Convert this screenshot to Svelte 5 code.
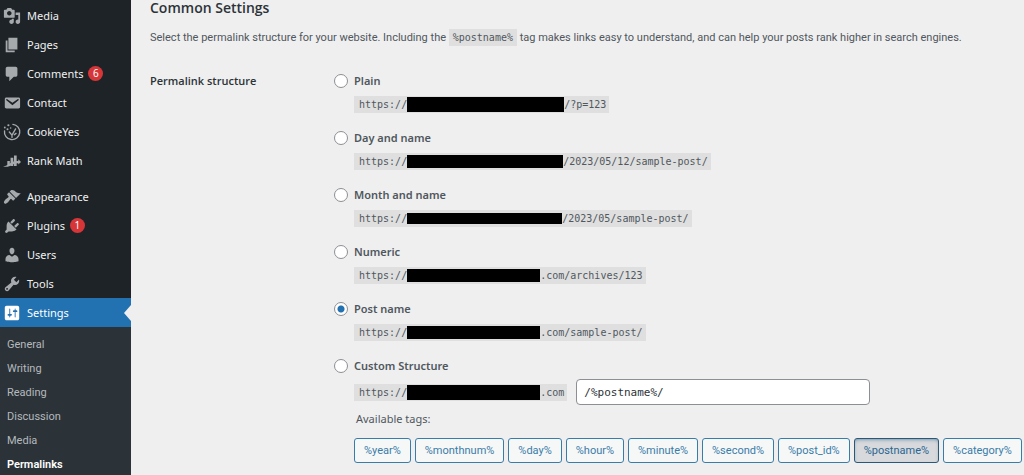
<script>
  const mainItems = [
    { label: 'Media', icon: 'M13 11V4c0-.55-.45-1-1-1h-1.670L9 1H5L3.670 3H2c-.55 0-1 .45-1 1v7c0 .55.45 1 1 1h10c.55 0 1-.45 1-1zM7 4.500c1.380 0 2.500 1.120 2.500 2.500S8.380 9.500 7 9.500 4.500 8.380 4.500 7 5.620 4.500 7 4.500zM14 6h5v10.500c0 1.380-1.120 2.500-2.500 2.500S14 17.880 14 16.500s1.120-2.500 2.500-2.500c.17 0 .34.02.5.05V9h-3V6zm-4 8.050V13h2v3.500c0 1.380-1.120 2.500-2.500 2.500S7 17.880 7 16.500 8.120 14 9.500 14c.17 0 .34.02.5.05z' },
    { label: 'Pages', icon: 'M6 15V2h10v13H6zm-1 1h8v2H3V5h2v11z' },
    { label: 'Comments', count: 6, icon: 'M5 2h9c1.100 0 2 .9 2 2v7c0 1.100-.9 2-2 2h-2l-5 5v-5H5c-1.100 0-2-.9-2-2V4c0-1.100.9-2 2-2z' },
    { label: 'Contact', icon: 'M3.870 4h13.250C18.370 4 19 4.590 19 5.790v8.420c0 1.190-.63 1.790-1.880 1.790H3.870c-1.250 0-1.880-.6-1.880-1.790V5.790c0-1.200.63-1.790 1.880-1.790zm6.620 8.600l6.740-5.530c.24-.2.43-.66.13-1.070-.29-.41-.82-.42-1.170-.17l-5.700 3.860L4.800 5.830c-.35-.25-.88-.24-1.170.17-.3.41-.11.87.13 1.070z' },
    { label: 'CookieYes', kind: 'cookie' },
    { label: 'Rank Math', kind: 'rank' }
  ];
  const adminItems = [
    { label: 'Appearance', icon: 'M14.480 11.060L7.410 3.990l1.500-1.500c.5-.56 2.300-.47 3.510.32 1.210.8 1.430 1.280 2.910 2.100 1.180.64 2.450 1.260 4.450.85zm-.71.71L6.700 4.700 4.930 6.470c-.39.39-.39 1.020 0 1.410l1.060 1.060c.39.39.39 1.030 0 1.420-.6.6-1.430 1.110-2.210 1.690-.35.26-.7.53-1.010.84C1.430 14.230.4 16.080 1.400 17.070c.99 1 2.840-.03 4.180-1.360.31-.31.58-.66.85-1.020.57-.78 1.080-1.610 1.690-2.210.39-.39 1.020-.39 1.410 0l1.060 1.060c.39.39 1.020.39 1.410 0z' },
    { label: 'Plugins', count: 1, icon: 'M13.110 4.360L9.870 7.600 8 5.730l3.240-3.240c.35-.34 1.050-.2 1.560.32.52.51.66 1.210.31 1.550zm-8 1.770l.91-1.120 9.010 9.010-1.190.84c-.71.71-2.630 1.160-3.820 1.160H6.140L4.900 17.260c-.59.59-1.540.59-2.120 0-.59-.58-.59-1.530 0-2.120l1.240-1.240v-3.880c0-1.130.4-3.190 1.090-3.890zm7.260 3.970l3.240-3.240c.34-.35 1.040-.21 1.550.31.52.51.66 1.210.31 1.550l-3.240 3.250z' },
    { label: 'Users', icon: 'M10 9.250c-2.270 0-2.730-3.440-2.730-3.440C7 4.020 7.820 2 9.970 2c2.160 0 2.980 2.020 2.710 3.810 0 0-.41 3.440-2.680 3.440zm0 2.570L12.720 10c2.390 0 4.520 2.330 4.520 4.530v2.490s-3.650 1.130-7.240 1.130c-3.650 0-7.240-1.130-7.240-1.130v-2.490c0-2.250 1.940-4.480 4.470-4.480z' },
    { label: 'Tools', icon: 'M16.680 9.770c-1.340 1.340-3.300 1.670-4.950.99l-5.410 6.520c-.99.99-2.590.99-3.580 0s-.99-2.590 0-3.570l6.520-5.420c-.68-1.650-.35-3.610.99-4.950 1.280-1.280 3.120-1.620 4.720-1.060l-2.890 2.890 2.820 2.820 2.860-2.870c.53 1.580.18 3.390-1.080 4.650zM3.810 16.210c.4.39 1.040.39 1.430 0 .4-.4.4-1.040 0-1.430-.39-.4-1.030-.4-1.430 0-.39.39-.39 1.030 0 1.430z' },
    { label: 'Settings', current: true, icon: 'M18 16V4c0-1.100-.9-2-2-2H4c-1.100 0-2 .9-2 2v12c0 1.100.9 2 2 2h12c1.100 0 2-.9 2-2zM8 11h1c.55 0 1 .45 1 1s-.45 1-1 1H8v1.500c0 .28-.22.5-.5.5s-.5-.22-.5-.5V13H6c-.55 0-1-.45-1-1s.45-1 1-1h1V5.500c0-.28.22-.5.5-.5s.5.220.5.5V11zm5-2h-1c-.55 0-1-.45-1-1s.45-1 1-1h1V5.500c0-.28.22-.5.5-.5s.5.220.5.5V7h1c.55 0 1 .45 1 1s-.45 1-1 1h-1v5.500c0 .28-.22.5-.5.5s-.5-.22-.5-.5V9z' }
  ];
  const subItems = ['General', 'Writing', 'Reading', 'Discussion', 'Media', 'Permalinks'];

  // hidden: width and height of the blacked-out host name
  const options = [
    { id: 'plain', label: 'Plain', tail: '/?p=123', hidden: [157, 15] },
    { id: 'day', label: 'Day and name', tail: '/2023/05/12/sample-post/', hidden: [156, 13] },
    { id: 'month', label: 'Month and name', tail: '/2023/05/sample-post/', hidden: [155, 11] },
    { id: 'numeric', label: 'Numeric', tail: '.com/archives/123', hidden: [133, 13] },
    { id: 'post', label: 'Post name', tail: '.com/sample-post/', hidden: [133, 13] },
    { id: 'custom', label: 'Custom Structure', tail: '.com', hidden: [133, 15] }
  ];
  const tags = ['year', 'monthnum', 'day', 'hour', 'minute', 'second', 'post_id', 'postname', 'category'];

  let selected = $state('post');
  let structure = $state('/%postname%/');
</script>

{#snippet menu(items)}
  <ul class="menu">
    {#each items as item}
      <li>
        <a href="#top" class="item" class:current={item.current}>
          <svg class="icon" viewBox="0 0 20 20" aria-hidden="true">
            {#if item.kind === 'cookie'}
              <g fill="none" stroke="currentColor" stroke-width="1.500" stroke-linecap="round">
                <path d="M11 1.500a8.500 8.500 0 1 1-9.300 7.200" />
                <path d="M7 10l3 3.500 4-7M10 13.500v2.500M14.500 11.500l-2 1.500" />
              </g>
              <circle cx="2" cy="5" r="1" />
              <circle cx="6" cy="2.500" r="1.200" />
              <circle cx="8.500" cy="5.500" r=".9" />
              <circle cx="5" cy="7" r="1.100" />
            {:else if item.kind === 'rank'}
              <path d="M4.800 10h2.800v5.500H4.800zM8.400 6.500h3v9h-3zM12.200 4h3v11.500h-3z" />
              <path d="M0 16c3.500-.2 5.500-1.500 8.500-3.700 2.500-1.800 4.500-2.300 6.500-2.300h2V8l3 3-3 3v-1.500h-2c-1.500 0-3 .8-5 2-3 1.800-6 2.500-10 1.500z" />
            {:else}
              <path d={item.icon} />
            {/if}
          </svg>
          <span>{item.label}</span>
          {#if item.count}<span class="count">{item.count}</span>{/if}
        </a>
      </li>
    {/each}
  </ul>
{/snippet}

<div class="page" id="top">
  <nav class="sidebar" aria-label="Main menu">
    {@render menu(mainItems)}
    {@render menu(adminItems)}
    <ul class="submenu">
      {#each subItems as sub}
        <li><a href="#top" class:active={sub === 'Permalinks'}>{sub}</a></li>
      {/each}
    </ul>
  </nav>

  <main>
    <h2>Common Settings</h2>
    <p class="intro">
      Select the permalink structure for your website. Including the <code>%postname%</code> tag makes links easy to understand, and can help your posts rank higher in search engines.
    </p>

    <div class="form">
      <h3 id="structure-title">Permalink structure</h3>
      <div class="options" role="radiogroup" aria-labelledby="structure-title">
        {#each options as option}
          <div class="option">
            <input type="radio" id={option.id} name="structure" value={option.id} bind:group={selected} />
            <label for={option.id}>{option.label}</label>
            <div class="example">
              <code class="url">https://<span class="hidden" style="width:{option.hidden[0]}px;height:{option.hidden[1]}px"></span>{option.tail}</code>
              {#if option.id === 'custom'}
                <input class="text" type="text" aria-label="Custom structure" bind:value={structure} />
              {/if}
            </div>
          </div>
        {/each}
        <p class="available">Available tags:</p>
        <div class="tags">
          {#each tags as tag}
            <button type="button" class:pressed={structure.includes(`%${tag}%`)}>%{tag}%</button>
          {/each}
        </div>
      </div>
    </div>
  </main>
</div>

<style>
  :global(body) {
    margin: 0;
    background: #efefef;
    overflow: hidden;
  }
  .page {
    display: flex;
    min-height: 100vh;
    font: 11px/18px "Noto Sans", "Open Sans", sans-serif;
    color: #50575e;
  }
  ul, h2, h3, p {
    margin: 0;
    padding: 0;
    list-style: none;
  }
  a {
    text-decoration: none;
  }
  .sidebar {
    flex: 0 0 131px;
    background: #1d2327;
  }
  .menu {
    padding-top: 1px;
  }
  .menu + .menu {
    padding-top: 7px;
  }
  .item {
    position: relative;
    display: flex;
    align-items: center;
    height: 29px;
    padding-left: 3px;
    color: #f0f0f1;
  }
  .icon {
    width: 18px;
    height: 18px;
    margin-right: 6px;
    color: #a7aaad;
    fill: currentColor;
  }
  .current {
    background: #2271b1;
    color: #fff;
  }
  .current .icon {
    color: #fff;
  }
  .current::after {
    content: "";
    position: absolute;
    right: 0;
    top: 7px;
    border: 8px solid transparent;
    border-left: 0;
    border-right: 7px solid #efefef;
  }
  .count {
    width: 15px;
    height: 15px;
    margin-left: 5px;
    border-radius: 50%;
    background: #d63638;
    color: #fff;
    font-size: 10px;
    line-height: 15px;
    text-align: center;
  }
  .submenu {
    padding: 6px 0 4px;
    background: #2c3338;
  }
  .submenu a {
    display: block;
    padding-left: 7px;
    font-family: Roboto, sans-serif;
    line-height: 24px;
    color: #b4b9be;
  }
  .submenu .active {
    color: #fff;
    font-weight: 600;
  }
  main {
    flex: 1;
    min-width: 0;
    padding-left: 19px;
  }
  h2 {
    font: 600 14px/16px "Open Sans", sans-serif;
    color: #2c3338;
  }
  .intro {
    margin-top: 13px;
    font-family: Roboto, sans-serif;
  }
  code {
    display: inline-block;
    height: 17px;
    padding: 0 4px;
    background: #dfdfdf;
    font: 10px/17px "DejaVu Sans Mono", monospace;
    color: #50575e;
    white-space: nowrap;
  }
  .form {
    display: grid;
    grid-template-columns: 184px 1fr;
    margin-top: 25px;
  }
  h3 {
    font: 600 11px/18px "Open Sans", sans-serif;
    color: #2c3338;
  }
  .option {
    display: grid;
    grid-template-columns: 14px 1fr;
    column-gap: 6px;
    align-items: center;
    row-gap: 6px;
    padding-bottom: 16px;
  }
  .option:nth-child(6) {
    row-gap: 4px;
    padding-bottom: 5px;
  }
  input[type="radio"] {
    appearance: none;
    width: 14px;
    height: 14px;
    margin: 0;
    border: 1px solid #8c8f94;
    border-radius: 50%;
    background: #fff;
  }
  input[type="radio"]:checked {
    background: radial-gradient(circle, #2271b1 3px, #fff 4px);
  }
  label {
    font-weight: 600;
    color: #50575e;
  }
  .example {
    grid-column: 2;
    display: flex;
    align-items: center;
    gap: 9px;
  }
  .url {
    display: flex;
    align-items: center;
    padding: 0 3px 0 5px;
  }
  .hidden {
    background: #000;
  }
  .text {
    box-sizing: border-box;
    width: 294px;
    height: 26px;
    padding: 0 7px;
    border: 1px solid #8c8f94;
    border-radius: 4px;
    background: #fff;
    font: 11px "DejaVu Sans Mono", monospace;
    color: #2c3338;
  }
  .available {
    padding-left: 22px;
  }
  .tags {
    display: flex;
    gap: 4px;
    margin-top: 10px;
    padding-left: 20px;
  }
  button {
    height: 25px;
    padding: 0 9px;
    border: 1px solid #3a7ca8;
    border-radius: 3px;
    background: #f6f7f7;
    font: 11px Roboto, sans-serif;
    color: #3a7ca8;
  }
  .pressed {
    border-color: #2a5878;
    background: #d8d9dc;
    box-shadow: inset 0 2px 5px -3px #0a4b78;
    color: #2a6590;
  }
</style>
